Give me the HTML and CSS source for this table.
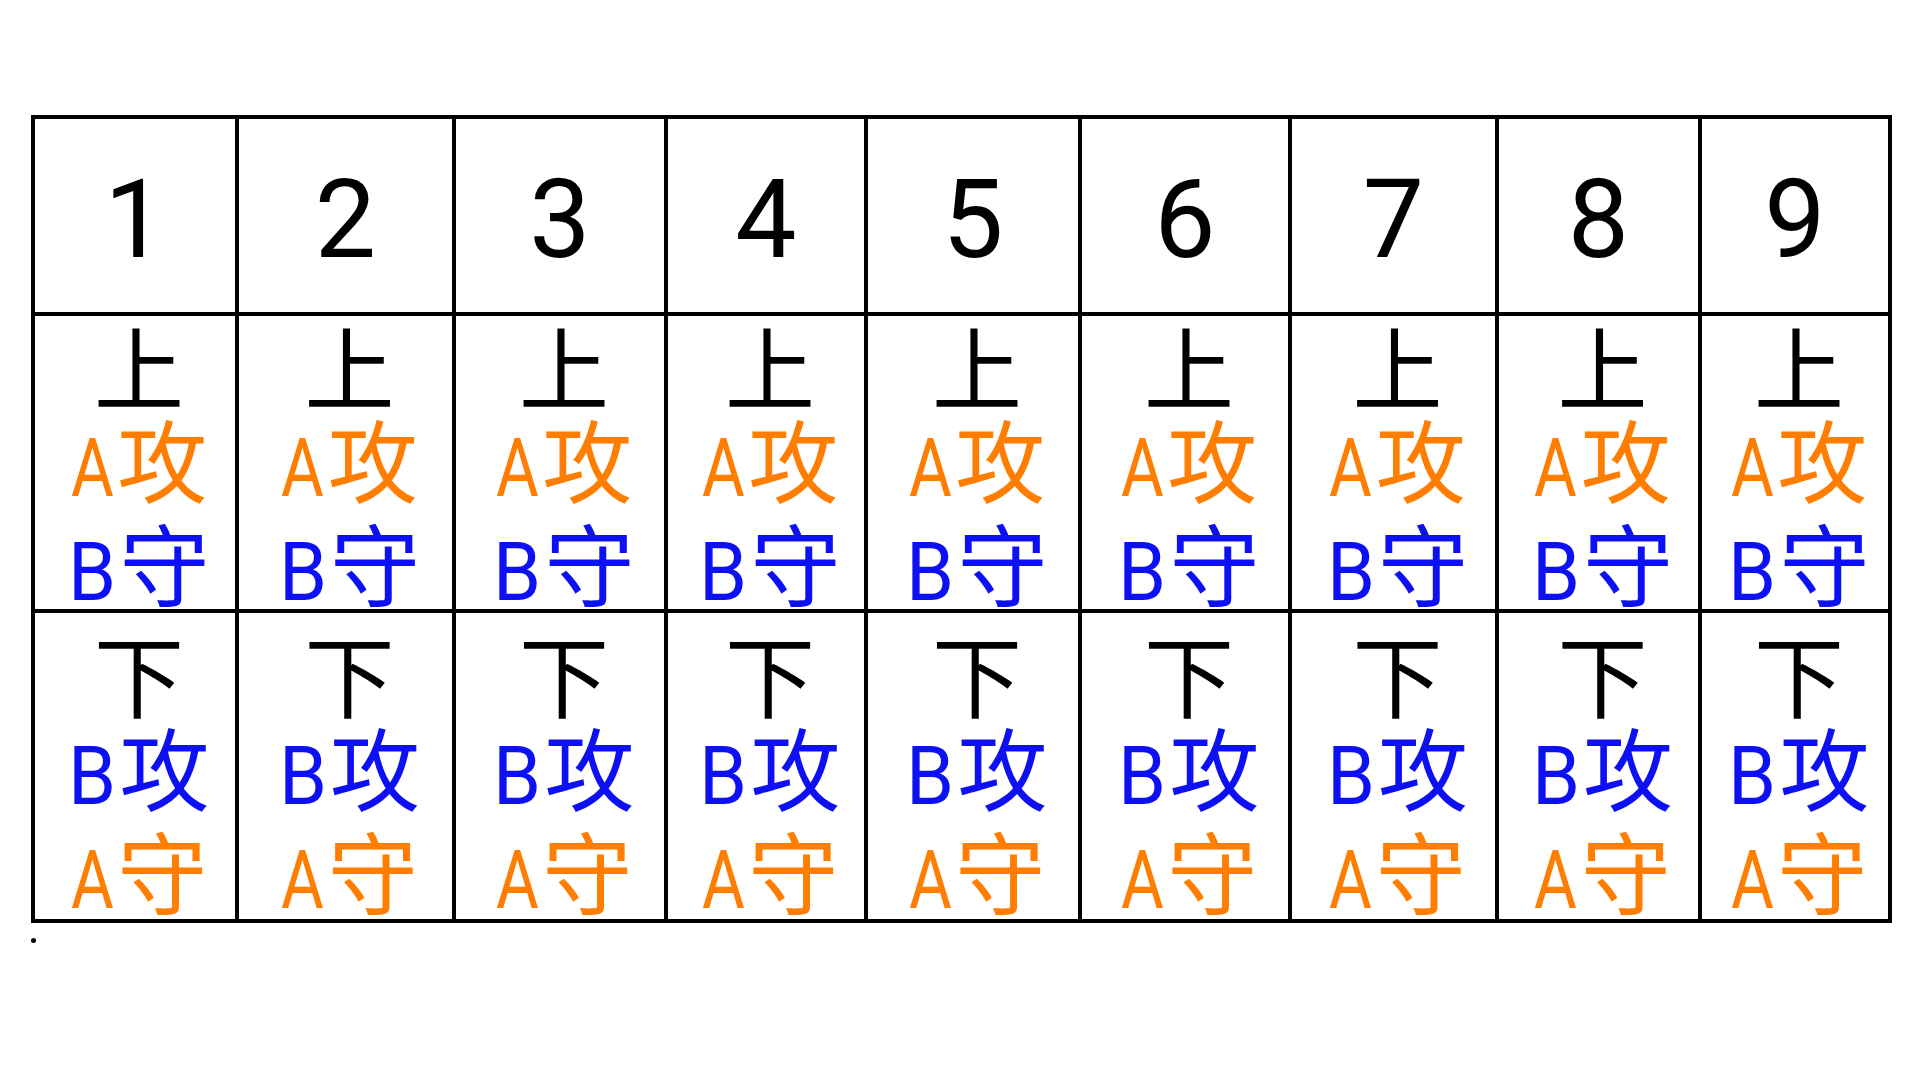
FILE: index.html
```html
<!DOCTYPE html>
<html lang="zh-CN">
<head>
<meta charset="utf-8">
<title>上下 攻守</title>
<link rel="stylesheet" href="styles.css">
</head>
<body>
<div class="sheet">
  <div class="grid">
    <div class="cell num"><span class="dg">1</span></div>
    <div class="cell num"><span class="dg">2</span></div>
    <div class="cell num"><span class="dg">3</span></div>
    <div class="cell num"><span class="dg">4</span></div>
    <div class="cell num"><span class="dg">5</span></div>
    <div class="cell num"><span class="dg">6</span></div>
    <div class="cell num"><span class="dg">7</span></div>
    <div class="cell num"><span class="dg">8</span></div>
    <div class="cell num"><span class="dg">9</span></div>

    <div class="cell txt"><div class="ln k">上</div><div class="ln o"><span class="lat la">A</span>攻</div><div class="ln b"><span class="lat lb">B</span>守</div></div>
    <div class="cell txt"><div class="ln k">上</div><div class="ln o"><span class="lat la">A</span>攻</div><div class="ln b"><span class="lat lb">B</span>守</div></div>
    <div class="cell txt"><div class="ln k">上</div><div class="ln o"><span class="lat la">A</span>攻</div><div class="ln b"><span class="lat lb">B</span>守</div></div>
    <div class="cell txt"><div class="ln k">上</div><div class="ln o"><span class="lat la">A</span>攻</div><div class="ln b"><span class="lat lb">B</span>守</div></div>
    <div class="cell txt"><div class="ln k">上</div><div class="ln o"><span class="lat la">A</span>攻</div><div class="ln b"><span class="lat lb">B</span>守</div></div>
    <div class="cell txt"><div class="ln k">上</div><div class="ln o"><span class="lat la">A</span>攻</div><div class="ln b"><span class="lat lb">B</span>守</div></div>
    <div class="cell txt"><div class="ln k">上</div><div class="ln o"><span class="lat la">A</span>攻</div><div class="ln b"><span class="lat lb">B</span>守</div></div>
    <div class="cell txt"><div class="ln k">上</div><div class="ln o"><span class="lat la">A</span>攻</div><div class="ln b"><span class="lat lb">B</span>守</div></div>
    <div class="cell txt"><div class="ln k">上</div><div class="ln o"><span class="lat la">A</span>攻</div><div class="ln b"><span class="lat lb">B</span>守</div></div>

    <div class="cell txt low"><div class="ln k">下</div><div class="ln b"><span class="lat lb">B</span>攻</div><div class="ln o"><span class="lat la">A</span>守</div></div>
    <div class="cell txt low"><div class="ln k">下</div><div class="ln b"><span class="lat lb">B</span>攻</div><div class="ln o"><span class="lat la">A</span>守</div></div>
    <div class="cell txt low"><div class="ln k">下</div><div class="ln b"><span class="lat lb">B</span>攻</div><div class="ln o"><span class="lat la">A</span>守</div></div>
    <div class="cell txt low"><div class="ln k">下</div><div class="ln b"><span class="lat lb">B</span>攻</div><div class="ln o"><span class="lat la">A</span>守</div></div>
    <div class="cell txt low"><div class="ln k">下</div><div class="ln b"><span class="lat lb">B</span>攻</div><div class="ln o"><span class="lat la">A</span>守</div></div>
    <div class="cell txt low"><div class="ln k">下</div><div class="ln b"><span class="lat lb">B</span>攻</div><div class="ln o"><span class="lat la">A</span>守</div></div>
    <div class="cell txt low"><div class="ln k">下</div><div class="ln b"><span class="lat lb">B</span>攻</div><div class="ln o"><span class="lat la">A</span>守</div></div>
    <div class="cell txt low"><div class="ln k">下</div><div class="ln b"><span class="lat lb">B</span>攻</div><div class="ln o"><span class="lat la">A</span>守</div></div>
    <div class="cell txt low"><div class="ln k">下</div><div class="ln b"><span class="lat lb">B</span>攻</div><div class="ln o"><span class="lat la">A</span>守</div></div>
  </div>
  <div class="dot"></div>
</div>
</body>
</html>
```

FILE: styles.css
```css
html, body {
  margin: 0;
  padding: 0;
  background: #ffffff;
}

body {
  width: 1920px;
  height: 1080px;
  overflow: hidden;
  font-family: "Noto Sans CJK SC", sans-serif;
  color: #000;
}

.sheet {
  padding: 115px 0 0 31px;
}

.grid {
  display: grid;
  grid-template-columns: 200px 213px 208px 196px 210px 206px 203px 199px 186px;
  grid-template-rows: 193px 293px 306px;
  gap: 4px;
  padding: 4px;
  background: #000;
  width: max-content;
}

.cell {
  background: #fff;
  display: flex;
  flex-direction: column;
  align-items: center;
  justify-content: center;
}

.num {
  font-family: Roboto, "Noto Sans", sans-serif;
  font-weight: 400;
  font-size: 109px;
  line-height: 1;
  padding-top: 10px;
}

.dg {
  display: inline-block;
}

.txt {
  padding-left: 8px;
  padding-top: 12px;
}

.txt.low {
  padding-top: 20px;
}

.ln {
  font-size: 90px;
  line-height: 93px;
  white-space: nowrap;
  display: flex;
  align-items: baseline;
}

.lat {
  display: inline-block;
  font-family: Roboto, "Noto Sans", sans-serif;
  font-weight: 400;
  font-size: 82px;
  transform-origin: left center;
}

.la {
  transform: scaleX(0.8);
  margin-right: -7px;
}

.lb {
  transform: scaleX(0.94);
  margin-right: 0;
}

.k { color: #000; }
.o { color: #ff7d00; }
.b { color: #0c10f2; }

.dot {
  width: 5px;
  height: 5px;
  border-radius: 50%;
  background: #000;
  margin: 15px 0 0 0;
}
```
